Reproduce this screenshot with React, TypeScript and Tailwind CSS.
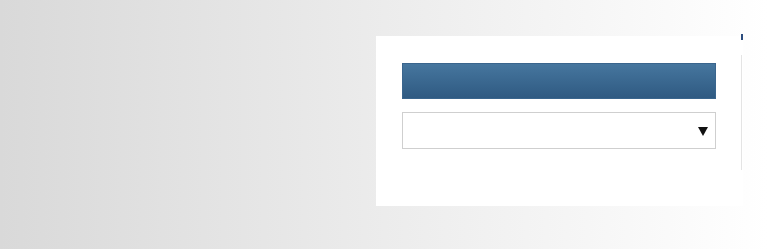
export default function App() {
  return (
    <div className="h-[249px] w-full bg-gradient-to-r from-[#d9d9d9] via-[#ececec] to-white flex pl-[376px] pt-[36px] font-['Liberation_Sans',sans-serif]">
      {/* panel */}
      <div className="w-[367px] h-[170px] bg-white flex">
        <div className="pl-[26px] pt-[27px] flex flex-col">
          <div className="w-[314px] h-[36px] bg-gradient-to-b from-[#46769e] to-[#2f5a82] border border-[#3a658d]" />
          <div className="mt-[13px] w-[314px] h-[37px] border border-[#cfcfcf] bg-white flex items-center justify-end pr-[7px]">
            <svg width="10" height="9" viewBox="0 0 10 9" className="mt-[2px]">
              <polygon points="0,0 10,0 5,9" fill="#111" />
            </svg>
          </div>
        </div>
        <div className="ml-[25px] flex flex-col items-start">
          <div className="w-[2px] h-[6px] bg-[#2c4d7e] -mt-[2px]" />
          <div className="mt-[15px] w-px h-[115px] bg-[#e4e4e4]" />
        </div>
      </div>
    </div>
  );
}
